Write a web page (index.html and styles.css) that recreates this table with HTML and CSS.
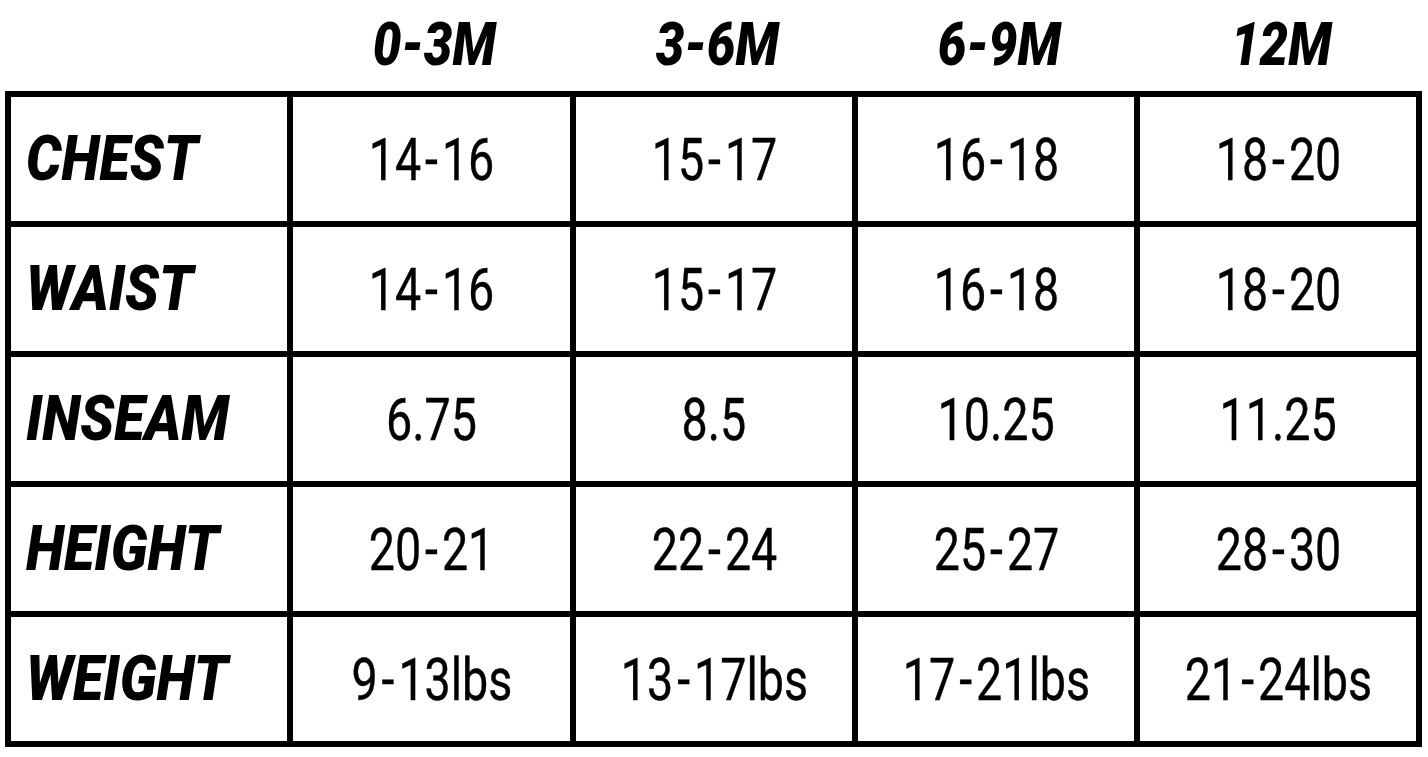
FILE: index.html
```html
<!DOCTYPE html>
<html>
<head>
<meta charset="utf-8">
<link rel="stylesheet" href="styles.css">
</head>
<body>
<div class="chart">
  <div class="head-row">
    <div class="head-cell"></div>
    <div class="head-cell"><span class="hd">0-3M</span></div>
    <div class="head-cell"><span class="hd">3-6M</span></div>
    <div class="head-cell"><span class="hd">6-9M</span></div>
    <div class="head-cell"><span class="hd">12M</span></div>
  </div>
  <div class="table">
    <div class="cell label"><span class="lb">CHEST</span></div>
    <div class="cell"><span class="num">14<span class="dash">-</span>16</span></div>
    <div class="cell"><span class="num">15<span class="dash">-</span>17</span></div>
    <div class="cell"><span class="num">16<span class="dash">-</span>18</span></div>
    <div class="cell"><span class="num">18<span class="dash">-</span>20</span></div>

    <div class="cell label"><span class="lb">WAIST</span></div>
    <div class="cell"><span class="num">14<span class="dash">-</span>16</span></div>
    <div class="cell"><span class="num">15<span class="dash">-</span>17</span></div>
    <div class="cell"><span class="num">16<span class="dash">-</span>18</span></div>
    <div class="cell"><span class="num">18<span class="dash">-</span>20</span></div>

    <div class="cell label"><span class="lb">INSEAM</span></div>
    <div class="cell"><span class="num">6.75</span></div>
    <div class="cell"><span class="num">8.5</span></div>
    <div class="cell"><span class="num">10.25</span></div>
    <div class="cell"><span class="num">11.25</span></div>

    <div class="cell label"><span class="lb">HEIGHT</span></div>
    <div class="cell"><span class="num">20<span class="dash">-</span>21</span></div>
    <div class="cell"><span class="num">22<span class="dash">-</span>24</span></div>
    <div class="cell"><span class="num">25<span class="dash">-</span>27</span></div>
    <div class="cell"><span class="num">28<span class="dash">-</span>30</span></div>

    <div class="cell label"><span class="lb">WEIGHT</span></div>
    <div class="cell"><span class="num">9<span class="dash">-</span>13lbs</span></div>
    <div class="cell"><span class="num">13<span class="dash">-</span>17lbs</span></div>
    <div class="cell"><span class="num">17<span class="dash">-</span>21lbs</span></div>
    <div class="cell"><span class="num">21<span class="dash">-</span>24lbs</span></div>
  </div>
</div>
</body>
</html>
```
FILE: styles.css
```css
html, body {
  margin: 0;
  padding: 0;
  background: #fff;
}
body {
  font-family: Roboto, "Liberation Sans", sans-serif;
  color: #000;
}
.chart {
  padding-left: 5px;
  width: 1417px;
}
.head-row {
  display: grid;
  grid-template-columns: 282px 283px 282px 282px 282px;
  padding-left: 6px;
  height: 91px;
}
.head-cell {
  display: flex;
  align-items: center;
  justify-content: center;
  padding-bottom: 2px;
}
.hd {
  display: inline-block;
  font-weight: 900;
  font-style: italic;
  font-size: 60px;
  line-height: 1;
  transform: scaleX(0.85);
}
.table {
  display: grid;
  grid-template-columns: 276px 277px 276px 276px 276px;
  grid-auto-rows: 124px;
  gap: 6px;
  padding: 6px;
  background: #000;
  width: max-content;
}
.cell {
  background: #fff;
  display: flex;
  align-items: center;
  justify-content: center;
}
.cell.label {
  justify-content: flex-start;
  padding-left: 15px;
}
.num {
  display: inline-block;
  font-size: 59px;
  line-height: 1;
  transform: scaleX(0.79);
  -webkit-text-stroke: 0.4px #000;
}
.dash {
  margin: 0 5px;
}
.lb {
  display: inline-block;
  font-weight: 900;
  font-style: italic;
  font-size: 62px;
  line-height: 1;
  transform: scaleX(0.9);
  transform-origin: left center;
}
```
